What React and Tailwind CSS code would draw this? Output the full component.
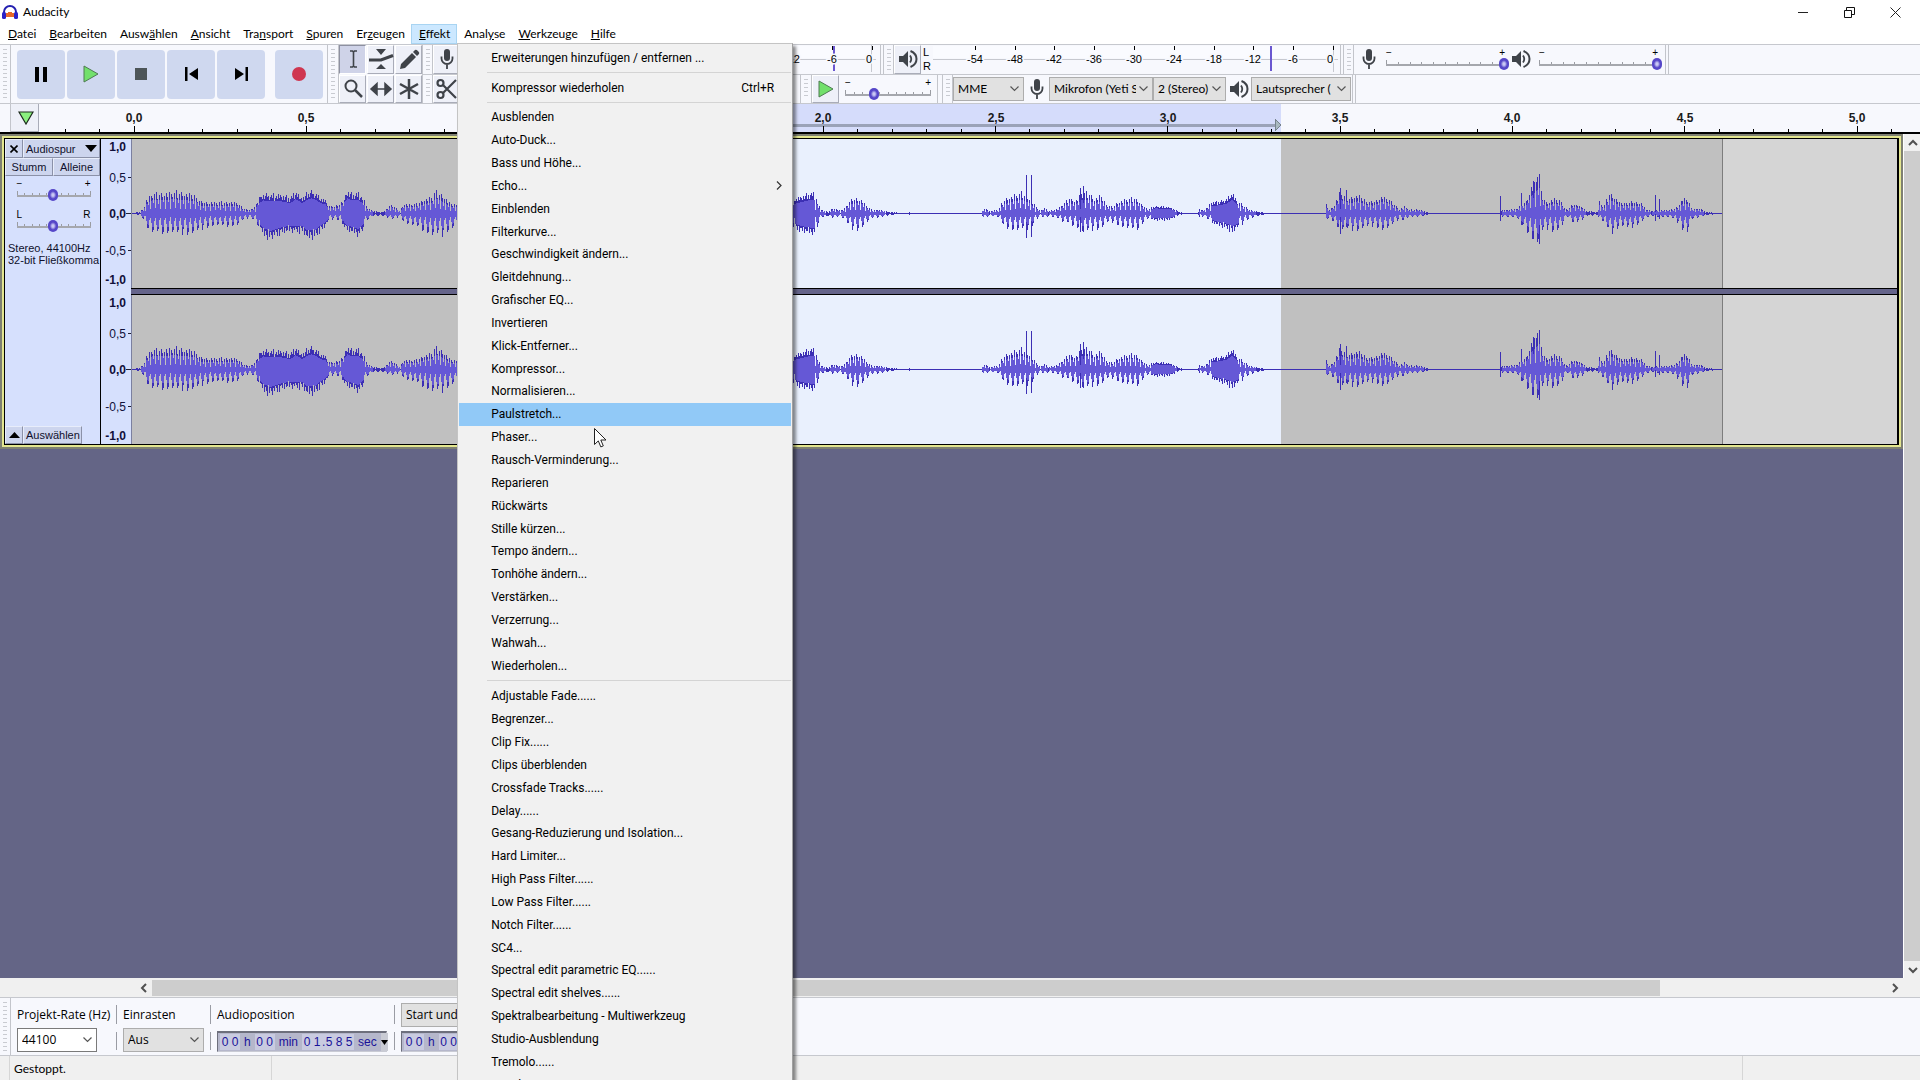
import { useState } from 'react';

const MENUS = [
  ['', 'D', 'atei'],
  ['', 'B', 'earbeiten'],
  ['Ausw', 'ä', 'hlen'],
  ['', 'A', 'nsicht'],
  ['Tra', 'n', 'sport'],
  ['', 'S', 'puren'],
  ['Er', 'z', 'eugen'],
  ['', 'E', 'ffekt'],
  ['Anal', 'y', 'se'],
  ['', 'W', 'erkzeuge'],
  ['', 'H', 'ilfe'],
];

const BUILT_IN_EFFECTS = [
  'Ausblenden', 'Auto-Duck...', 'Bass und Höhe...', 'Echo...', 'Einblenden', 'Filterkurve...',
  'Geschwindigkeit ändern...', 'Gleitdehnung...', 'Grafischer EQ...', 'Invertieren',
  'Klick-Entferner...', 'Kompressor...', 'Normalisieren...', 'Paulstretch...', 'Phaser...',
  'Rausch-Verminderung...', 'Reparieren', 'Rückwärts', 'Stille kürzen...', 'Tempo ändern...',
  'Tonhöhe ändern...', 'Verstärken...', 'Verzerrung...', 'Wahwah...', 'Wiederholen...',
];

const PLUGIN_EFFECTS = [
  'Adjustable Fade......', 'Begrenzer...', 'Clip Fix......', 'Clips überblenden',
  'Crossfade Tracks......', 'Delay......', 'Gesang-Reduzierung und Isolation...',
  'Hard Limiter...', 'High Pass Filter......', 'Low Pass Filter......', 'Notch Filter......',
  'SC4...', 'Spectral edit parametric EQ......', 'Spectral edit shelves......',
  'Spektralbearbeitung - Multiwerkzeug', 'Studio-Ausblendung', 'Tremolo......', 'Vocal Remover...',
];

// [x, peak above zero, peak below zero]
const ENVELOPE = [
  [0, 0, 0], [8, 1, 1], [12, 4, 5], [15, 13, 13], [19, 18, 18], [22, 20, 19], [29, 19, 19], [42, 21, 19],
  [56, 19, 20], [64, 18, 19], [69, 11, 15], [79, 11, 12], [94, 11, 12], [105, 11, 12], [112, 4, 6],
  [119, 3, 4], [124, 7, 7], [127, 15, 14], [132, 19, 21], [139, 18, 25], [149, 18, 20], [159, 15, 17],
  [164, 21, 18], [171, 15, 18], [176, 20, 24], [180, 22, 24], [184, 20, 23], [189, 15, 17], [194, 13, 12],
  [197, 7, 7], [202, 7, 5], [207, 8, 6], [212, 14, 11], [216, 22, 17], [221, 19, 19], [227, 19, 22],
  [232, 15, 15], [236, 5, 6], [242, 2, 2], [252, 1, 2], [257, 6, 4], [260, 9, 6], [264, 5, 4], [269, 2, 2],
  [272, 10, 8], [277, 9, 10], [284, 9, 12], [294, 14, 18], [301, 16, 22], [304, 22, 20], [311, 17, 21],
  [319, 10, 16], [327, 8, 10], [500, 8, 8], [640, 12, 10], [663, 14, 14], [671, 17, 18], [679, 20, 20],
  [683, 19, 20], [687, 9, 10], [689, 4, 4], [697, 1, 2], [702, 5, 4], [709, 2, 2], [714, 6, 7], [719, 13, 13],
  [725, 15, 17], [731, 13, 13], [736, 6, 8], [741, 3, 4], [749, 3, 3], [760, 1, 1], [770, 0, 0], [850, 0, 0],
  [852, 5, 4], [858, 2, 2], [867, 3, 3], [872, 13, 12], [883, 18, 17], [891, 20, 15], [899, 14, 14],
  [905, 6, 6], [909, 2, 2], [912, 6, 4], [917, 2, 2], [926, 4, 4], [931, 9, 8], [938, 15, 10], [944, 12, 12],
  [950, 20, 18], [957, 20, 17], [963, 14, 15], [969, 18, 15], [976, 8, 9], [981, 6, 8], [988, 12, 12],
  [994, 14, 14], [1003, 15, 16], [1008, 12, 15], [1013, 6, 7], [1017, 4, 5], [1024, 7, 6], [1038, 6, 6],
  [1044, 3, 3], [1049, 0, 0], [1066, 0, 0], [1068, 3, 2], [1074, 4, 3], [1079, 10, 8], [1088, 12, 12],
  [1095, 14, 14], [1101, 20, 18], [1106, 12, 14], [1113, 7, 8], [1119, 3, 4], [1131, 1, 1], [1135, 0, 0],
  [1194, 0, 0], [1195, 8, 6], [1198, 3, 4], [1203, 8, 8], [1208, 20, 16], [1219, 15, 15], [1227, 18, 17],
  [1234, 13, 13], [1242, 11, 12], [1251, 17, 16], [1257, 14, 14], [1264, 8, 9], [1268, 3, 4], [1273, 7, 7],
  [1278, 3, 3], [1287, 4, 3], [1295, 1, 1], [1299, 0, 0], [1368, 0, 0], [1371, 3, 3], [1381, 4, 3],
  [1386, 5, 4], [1390, 10, 11], [1395, 12, 16], [1400, 26, 24], [1404, 32, 26], [1408, 38, 30],
  [1410, 20, 18], [1415, 10, 14], [1423, 14, 18], [1430, 12, 15], [1433, 5, 6], [1436, 3, 3], [1442, 10, 9],
  [1451, 6, 6], [1455, 2, 2], [1466, 1, 1], [1468, 12, 5], [1472, 6, 8], [1478, 19, 18], [1482, 17, 18],
  [1489, 10, 12], [1499, 11, 14], [1510, 10, 8], [1514, 4, 4], [1520, 2, 2], [1530, 3, 3], [1539, 3, 3],
  [1546, 6, 8], [1551, 14, 15], [1556, 14, 18], [1561, 4, 5], [1569, 4, 3], [1575, 1, 1], [1591, 0, 0],
];

const SPIKES = [
  [778, 1, 1], [895, 38, 24], [900, 38, 23], [949, 25, 18], [952, 27, 18], [1050, 1, 1], [1068, 4, 3],
  [1209, 25, 20], [1215, 23, 13], [1369, 17, 7], [1390, 20, 11], [1402, 32, 25], [1406, 36, 28], [1408, 39, 30], [1524, 18, 7], [1528, 14, 5],
];

function peakAt(x) {
  let i = 1;
  while (i < ENVELOPE.length - 1 && ENVELOPE[i][0] < x) i++;
  const [x0, u0, d0] = ENVELOPE[i - 1];
  const [x1, u1, d1] = ENVELOPE[i];
  const t = Math.min(1, (x - x0) / (x1 - x0));
  return [u0 + (u1 - u0) * t, d0 + (d1 - d0) * t];
}

function buildWave(mid) {
  let peaks = '';
  let rms = '';
  for (let x = 0; x < 1591; x++) {
    const [up, down] = peakAt(x);
    // loud vowels are dense, the others show single periods
    const dense = (x > 128 && x < 196) || (x > 212 && x < 232) || (x > 663 && x < 684) || (x > 1019 && x < 1044) || (x > 1080 && x < 1106);
    const phase = x % 5;
    const jitter = 0.9 + ((x * 7919) % 13) / 60;
    const f = jitter * (dense ? [1, 0.8, 1, 0.76, 0.9][phase] : [1, 0.8, 0.5, 0.95, 0.22][phase]);
    const g = jitter * (dense ? [0.85, 1, 0.7, 1, 0.74][phase] : [0.55, 1, 0.85, 0.35, 0.2][phase]);
    const u = Math.round(up * f);
    const d = Math.round(down * g);
    peaks += `M${x} ${mid - u}V${mid + 1 + d}`;
    if (up > 2) {
      rms += `M${x} ${mid - Math.min(u, Math.round(up * 0.66))}V${mid + 1 + Math.min(d, Math.round(down * 0.68))}`;
    }
  }
  SPIKES.forEach(([x, u, d]) => {
    peaks += `M${x} ${mid - u}V${mid + 1 + d}`;
  });
  return { peaks, rms };
}

const WAVE = buildWave(74);

function Channel() {
  return (
    <svg className="block w-full flex-1 bg-[#d5d5d5]" aria-hidden="true" shapeRendering="crispEdges">
      <rect width="1591" height="100%" fill="#c0c0c0" />
      <rect x="500" width="650" height="100%" fill="#e9f0fd" />
      <g transform="translate(0.5 0)">
        <path d={WAVE.peaks} stroke="#3c2fb4" />
        <path d={WAVE.rms} stroke="#6558d6" />
      </g>
      <rect x="1591" width="1" height="100%" fill="#7d7d7d" />
      <rect width="1" height="100%" fill="#7b80a0" />
    </svg>
  );
}

function Grip({ className = '' }) {
  return (
    <div className={`flex w-[11px] shrink-0 justify-center border-r border-[#c3c5cb] py-1 ${className}`}>
      <div className="w-1 bg-[repeating-linear-gradient(to_bottom,#c9cbd1_0_1px,transparent_1px_4px)]" />
    </div>
  );
}

function MicIcon() {
  return (
    <svg width="14" height="22" viewBox="0 0 14 22" aria-hidden="true">
      <rect x="4" y="1" width="6" height="12" rx="3" fill="#3f4349" />
      <path d="M1.5 8.500v2a5.500 5.500 0 0 0 11 0v-2M7 16v5" fill="none" stroke="#3f4349" strokeWidth="1.800" />
    </svg>
  );
}

function SpeakerIcon() {
  return (
    <svg width="20" height="20" viewBox="0 0 20 20" aria-hidden="true">
      <path d="M1 7h4l5-5v16l-5-5H1z" fill="#3f4349" />
      <path d="M12 6.500q2.500 3.500 0 7" fill="none" stroke="#3f4349" strokeWidth="1.800" />
      <path d="M12.500 2q6 2.500 6 8t-6 8" fill="none" stroke="#3f4349" strokeWidth="2" />
    </svg>
  );
}

function PlayIcon({ className }) {
  return (
    <svg viewBox="0 0 16 18" className={className} aria-hidden="true">
      <path d="M1 1l14 8-14 8z" fill="#72e06b" stroke="#4e7a52" />
    </svg>
  );
}

function Slider({ label, value, width, low = '−', high = '+', ticks = 10 }) {
  const step = (width - 9) / ticks;
  return (
    <div className="shrink-0 font-['Liberation_Sans',sans-serif]" style={{ width }}>
      <div className="flex h-[10px] justify-between px-1 text-[10px] leading-[10px] text-black">
        <span>{low}</span>
        <span>{high}</span>
      </div>
      <div className="grid h-3">
        <svg className="h-3 w-full [grid-area:1/1]" aria-hidden="true" shapeRendering="crispEdges">
          <rect x="4" y="6" width={width - 8} height="2" fill="#a5a7ad" />
          {Array.from({ length: ticks + 1 }, (_, i) => (
            <rect key={i} x={Math.round(4 + i * step)} y={i % ticks ? 4 : 2} width="1" height={i % ticks ? 2 : 4} fill="#9a9ca2" />
          ))}
        </svg>
        <input
          type="range"
          aria-label={label}
          defaultValue={value}
          className="z-10 h-3 w-full min-w-0 appearance-none bg-transparent [grid-area:1/1] [&::-webkit-slider-thumb]:h-3 [&::-webkit-slider-thumb]:w-[10px] [&::-webkit-slider-thumb]:appearance-none [&::-webkit-slider-thumb]:rounded-full [&::-webkit-slider-thumb]:bg-[radial-gradient(#c9c8f4_0_15%,#5647c8_45%)]"
        />
      </div>
    </div>
  );
}

function Combo({ label, value, className = '', tone = 'border-[#adadad] bg-[#e1e1e1]' }) {
  return (
    <div className={`grid items-center border ${tone} ${className}`}>
      <select aria-label={label} className="h-full w-full min-w-0 appearance-none overflow-hidden bg-transparent pr-4 pl-1 text-black outline-none [grid-area:1/1]">
        <option>{value}</option>
      </select>
      <svg width="9" height="6" viewBox="0 0 9 6" className="pointer-events-none mr-1 justify-self-end [grid-area:1/1]" aria-hidden="true">
        <path d="M.5.500l4 4 4-4" fill="none" stroke="#555" strokeWidth="1.200" />
      </svg>
    </div>
  );
}

const DB_MARKS = [0, 6, 12, 18, 24, 30, 36, 42, 48, 54];

function Meter({ zero, peak, width, marks = DB_MARKS }) {
  return (
    <svg width={width} height="27" className="shrink-0 font-['Liberation_Sans',sans-serif]" aria-hidden="true">
      <g shapeRendering="crispEdges">
        <rect y="1" width={width - 5} height="12" fill="#fafbff" />
        <path d={`M0 14.500H${width}M${width - 4.5} 0V27`} stroke="#c6c8cf" />
        <path d={`M${peak} 1V26`} stroke="#6a57d0" strokeWidth="2" />
      </g>
      {marks.map((db, i) => {
        const x = Math.round(zero - i * 39.8);
        return (
          <g key={db}>
            <path d={`M${x + 0.5} 1v4`} stroke="#000" />
            <text x={db ? x : x - 3} y="18" textAnchor="middle" fontSize="11" stroke="#f7f8fd" strokeWidth="3" paintOrder="stroke">
              {db ? `-${db}` : '0'}
            </text>
          </g>
        );
      })}
    </svg>
  );
}

function TransportButton({ label, children }) {
  return (
    <button type="button" aria-label={label} className="flex h-[49px] w-12 items-center justify-center rounded bg-[#cfd8ef]">
      {children}
    </button>
  );
}

function TransportBar() {
  return (
    <div className="flex border-r border-[#c3c5cb]">
      <Grip />
      <div className="flex items-center gap-0.5 pr-1 pl-1.5">
        <TransportButton label="Pause">
          <svg width="12" height="15" aria-hidden="true"><path d="M0 0h4v15H0zM8 0h4v15H8z" /></svg>
        </TransportButton>
        <TransportButton label="Wiedergabe"><PlayIcon className="h-[18px] w-4" /></TransportButton>
        <TransportButton label="Stopp">
          <svg width="12" height="12" aria-hidden="true"><rect width="12" height="12" fill="#4d5558" /></svg>
        </TransportButton>
        <TransportButton label="Zum Anfang">
          <svg width="13" height="14" aria-hidden="true"><path d="M0 0h2.500v14H0zM13 1v12L4 7z" /></svg>
        </TransportButton>
        <TransportButton label="Zum Ende">
          <svg width="13" height="14" aria-hidden="true"><path d="M10.500 0H13v14h-2.500zM0 1v12l9-6z" /></svg>
        </TransportButton>
        <div className="w-1.5" />
        <TransportButton label="Aufnahme">
          <svg width="14" height="14" aria-hidden="true"><circle cx="7" cy="7" r="7" fill="#cf3650" /></svg>
        </TransportButton>
      </div>
    </div>
  );
}

const TOOLS = [
  { name: 'Auswahl', art: <path d="M7 3h2.500l1 1 1-1H14M7 19h2.500l1-1 1 1H14M10.500 4v14" strokeWidth="1.600" /> },
  {
    name: 'Hüllkurve',
    art: (
      <>
        <path d="M-2 12h12l12-4.500" strokeWidth="3" />
        <path d="M5 1h10l-5 6zM5 21h10l-5-5z" fill="#3f4349" stroke="none" />
      </>
    ),
  },
  { name: 'Zeichnen', art: <path d="M1 21l1-5L13 5l4 4L6 20zM14 4l2-2q1-1 3 1t1 3l-2 2z" fill="#3f4349" stroke="none" /> },
  { name: 'Zoom', art: <><circle cx="8" cy="8" r="5.500" /><path d="M12 12l7 7" strokeWidth="2.500" /></> },
  { name: 'Zeitverschiebung', art: <path d="M1 11h18M6 5.500L0 11l6 5.500zM14 5.500l6 5.500-6 5.500z" fill="#3f4349" strokeWidth="1.500" /> },
  { name: 'Multi', art: <path d="M10 1v20M1 6l18 10M19 6L1 16" strokeWidth="2.500" /> },
];

function ToolsBar() {
  return (
    <div className="flex">
      <Grip />
      <div className="grid grid-cols-3 gap-px">
        {TOOLS.map((tool, i) => (
          <button
            key={tool.name}
            type="button"
            aria-label={tool.name}
            className={`flex w-[27px] items-center justify-center border ${
              i === 0 ? 'border-[#8d90a0] border-r-white border-b-white bg-[#cfd3e8]' : 'border-white border-r-[#a9acb8] border-b-[#a9acb8] bg-[#eef0f8]'
            }`}
          >
            <svg width="20" height="22" viewBox="0 0 20 22" fill="none" stroke="#3f4349" strokeWidth="2" className="overflow-visible" aria-hidden="true">
              {tool.art}
            </svg>
          </button>
        ))}
      </div>
    </div>
  );
}

const squareButton = 'flex w-[27px] shrink-0 items-center justify-center border border-white border-r-[#a9acb8] border-b-[#a9acb8] bg-[#eef0f8]';

function Toolbars() {
  return (
    <div className="flex h-[60px] shrink-0 border-y border-[#c6c8ce] bg-[#f7f8fd]">
      <TransportBar />
      <ToolsBar />
      <div className="flex min-w-0 flex-1 flex-col">
        <div className="flex flex-1 border-b border-[#c6c8ce]">
          <div className="flex w-[459px] shrink-0 border-r border-[#c3c5cb]">
            <Grip className="border-l" />
            <button type="button" aria-label="Aufnahmepegel" className={squareButton}><MicIcon /></button>
            <div className="flex flex-1 justify-end pr-1"><Meter width={100} zero={96} peak={58} marks={[0, 6, 12]} /></div>
          </div>
          <div className="flex w-[460px] shrink-0 border-r border-[#c3c5cb]">
            <Grip className="ml-0.5 border-l" />
            <button type="button" aria-label="Wiedergabepegel" className={squareButton}><SpeakerIcon /></button>
            <div className="flex flex-col justify-around px-0.5 font-['Liberation_Sans',sans-serif] text-[11px] leading-3">
              <span>L</span>
              <span>R</span>
            </div>
            <Meter width={405} zero={400} peak={338} />
          </div>
          <div className="flex w-[325px] shrink-0 items-center border-r border-[#c3c5cb]">
            <Grip className="ml-0.5 self-stretch border-l" />
            <div className="flex flex-1 items-center pl-2">
              <MicIcon />
              <div className="w-1.5" />
              <Slider label="Aufnahmelautstärke" width={127} value={100} />
              <div className="w-0.5" />
              <SpeakerIcon />
              <div className="w-1" />
              <Slider label="Wiedergabelautstärke" width={127} value={100} />
            </div>
          </div>
          <div className="ml-0.5 border-l border-[#c3c5cb]" />
        </div>
        <div className="flex flex-1">
          <div className="flex w-[379px] shrink-0 border-r border-[#c3c5cb]">
            <Grip className="border-l" />
            <button type="button" aria-label="Ausschneiden" className={squareButton}>
              <svg width="22" height="22" viewBox="0 0 22 22" fill="none" stroke="#3f4349" strokeWidth="2.200" aria-hidden="true">
                <circle cx="4.500" cy="5" r="3" />
                <circle cx="4.500" cy="17" r="3" />
                <path d="M7 7l13 13M7 15L20 2" />
              </svg>
            </button>
          </div>
          <div className="flex w-[137px] shrink-0 border-r border-[#c3c5cb]">
            <Grip />
            <button type="button" aria-label="Wiedergabe mit Geschwindigkeit" className={squareButton}><PlayIcon className="h-[18px] w-4" /></button>
            <div className="flex items-center pl-0.5"><Slider label="Wiedergabegeschwindigkeit" width={94} value={33} /></div>
          </div>
          <div className="flex w-[415px] shrink-0 items-stretch border-r border-[#c3c5cb]">
            <Grip className="ml-1 border-l" />
            <div className="flex flex-1 items-center py-0.5">
              <Combo label="Audio-Host" value="MME" className="h-6 w-[71px]" />
              <div className="flex w-[25px] justify-center"><MicIcon /></div>
              <Combo label="Aufnahmegerät" value="Mikrofon (Yeti Stereo Mic" className="h-6 w-[104px]" />
              <Combo label="Aufnahmekanäle" value="2 (Stereo)" className="h-6 w-[73px]" />
              <div className="flex w-[25px] justify-center"><SpeakerIcon /></div>
              <Combo label="Wiedergabegerät" value="Lautsprecher (" className="h-6 w-[100px]" />
            </div>
          </div>
          <div className="ml-0.5 border-l border-[#c3c5cb]" />
        </div>
      </div>
    </div>
  );
}

function Timeline() {
  const ticks = Array.from({ length: 54 }, (_, i) => i - 2);
  return (
    <div className="flex h-7 shrink-0 bg-[#f7f8fd]">
      <div className="w-[11px] border-r border-[#c3c5cb]" />
      <button type="button" aria-label="Angeheftete Wiedergabeposition" className="flex w-7 shrink-0 items-center justify-center border-r border-b border-[#a9acb8] bg-[#eef0f8] pl-0.5">
        <svg width="16" height="14" viewBox="0 0 16 14" aria-hidden="true">
          <path d="M1 1h14L8 13z" fill="#8af07e" stroke="#1d2b1d" strokeWidth="1.200" />
        </svg>
      </button>
      <svg className="h-7 min-w-0 flex-1 font-['Liberation_Sans',sans-serif]" role="img" aria-label="Zeitleiste">
        <g shapeRendering="crispEdges">
          <rect x="500" width="742" height="28" fill="#d5dcfb" />
          <rect x="500" y="20" width="736" height="3" fill="#9aa2b8" />
          <path d="M1236 15l6 6-6 6z" fill="#a9b9c0" stroke="#76838c" />
          {ticks.map((i) => (
            <rect key={i} x={Math.round(94.5 + i * 34.46)} y={i % 5 ? 25 : 22} width="1" height="6" fill="#000" />
          ))}
        </g>
        {ticks.filter((i) => i >= 0 && i % 5 === 0).map((i) => (
          <text key={i} x={Math.round(95 + i * 34.46)} y="18" textAnchor="middle" fontSize="12" fontWeight="700" fill="#1a1a1a">
            {(i / 10).toFixed(1).replace('.', ',')}
          </text>
        ))}
      </svg>
    </div>
  );
}

function AmplitudeScale() {
  return (
    <svg className="block w-full flex-1 font-['Liberation_Sans',sans-serif]" aria-hidden="true">
      {[['1,0', 12], ['0,5', 43], ['0,0', 79], ['-0,5', 116], ['-1,0', 145]].map(([text, y]) => (
        <text key={text} x="25" y={y} textAnchor="end" fontSize="12" fill="#10103a" fontWeight={text.endsWith('5') ? 400 : 700}>
          {text}
        </text>
      ))}
      <path d="M27 38.500h3M25 74.500h5M27 111.500h3" stroke="#223" />
    </svg>
  );
}

const panelButton = 'flex items-center border border-[#e8edfb] border-r-[#8b91a8] border-b-[#8b91a8] bg-[#cdd5ee]';

function TrackPanel() {
  return (
    <div className="flex w-24 shrink-0 flex-col border-r border-black bg-[#d6e0fd] font-['Liberation_Sans',sans-serif] text-[11px] leading-3 text-[#10102c]">
      <div className="flex h-[19px]">
        <button type="button" aria-label="Spur schließen" className={`w-[18px] justify-center ${panelButton}`}>
          <svg width="8" height="8" aria-hidden="true"><path d="M.5.500l7 7M7.500.500l-7 7" stroke="#000" strokeWidth="1.600" /></svg>
        </button>
        <button type="button" className={`flex-1 justify-between px-0.5 ${panelButton}`}>
          Audiospur
          <svg width="12" height="7" aria-hidden="true"><path d="M0 0h12L6 7z" /></svg>
        </button>
      </div>
      <div className="flex h-[18px]">
        <button type="button" className={`w-12 justify-center ${panelButton}`}>Stumm</button>
        <button type="button" className={`flex-1 justify-center ${panelButton}`}>Alleine</button>
      </div>
      <div className="flex flex-col items-center gap-[9px] pt-[3px] pl-0.5">
        <Slider label="Verstärkung" width={82} value={49} />
        <Slider label="Balance" width={82} value={49} low="L" high="R" />
      </div>
      <p className="mt-2.5 pl-[3px] whitespace-nowrap">
        Stereo, 44100Hz
        <br />
        32-bit Fließkomma
      </p>
      <div className="mt-auto flex h-[18px]">
        <button type="button" aria-label="Spur einklappen" className={`w-[18px] justify-center ${panelButton}`}>
          <svg width="11" height="6" aria-hidden="true"><path d="M0 6h11L5.500 0z" /></svg>
        </button>
        <button type="button" className={`w-[59px] pl-0.5 ${panelButton}`}>Auswählen</button>
      </div>
    </div>
  );
}

function Track() {
  return (
    <div className="border-2 border-[#7e8072] bg-black">
      <div className="flex h-[311px] border-2 border-[#e3e68f] bg-black py-px pr-0.5 pl-px">
        <TrackPanel />
        <div className="flex w-[30px] shrink-0 flex-col gap-[7px] bg-[#d6e0fd]">
          <AmplitudeScale />
          <AmplitudeScale />
        </div>
        <div className="flex min-w-0 flex-1 flex-col">
          <Channel />
          <div className="h-[7px] border-y border-black bg-[#65648a]" />
          <Channel />
        </div>
      </div>
    </div>
  );
}

const ARROWS = {
  up: 'M1 7l4-4 4 4',
  down: 'M1 3l4 4 4-4',
  left: 'M7 1L3 5l4 4',
  right: 'M3 1l4 4-4 4',
};

function ScrollArrow({ dir, label }) {
  return (
    <button type="button" aria-label={label} className="flex size-[17px] shrink-0 items-center justify-center">
      <svg width="10" height="10" aria-hidden="true">
        <path d={ARROWS[dir]} fill="none" stroke="#505050" strokeWidth="2" />
      </svg>
    </button>
  );
}

function TimeField({ label, parts }) {
  return (
    <div role="group" aria-label={label} className="flex h-[21px] w-[170px] items-center border border-[#c9cbd4] border-t-2 border-t-[#6d6f7c] border-l-[#6d6f7c] bg-[#b5b7cb] pl-0.5 font-['Liberation_Sans',sans-serif] text-[12px] leading-4 text-[#1a1299]">
      {parts.map((part, i) =>
        /\d/.test(part) ? (
          <span key={i} className="flex bg-[#c9cbe0]">
            {part.split('').map((c, j) => (
              <span key={j} className={c === '.' ? 'w-0.5 text-center' : 'w-[10px] text-center'}>{c}</span>
            ))}
          </span>
        ) : (
          <span key={i} className="px-1">{part}</span>
        ),
      )}
      <button type="button" aria-label="Format" className="ml-auto flex h-full w-2 items-center bg-[#c9cbd4]">
        <svg width="7" height="5" aria-hidden="true"><path d="M0 0h7L3.500 5z" /></svg>
      </button>
    </div>
  );
}

function SelectionBar() {
  const column = 'flex flex-col justify-between';
  const rule = (
    <div className="flex flex-col gap-2 py-0.5">
      <div className="w-px flex-1 bg-[#9a9ca4]" />
      <div className="w-px flex-1 bg-[#9a9ca4]" />
    </div>
  );
  return (
    <div className="flex h-[59px] shrink-0 border-y border-[#c6c8ce] bg-[#f7f8fd] font-['Open_Sans','Noto_Sans',sans-serif]">
      <Grip />
      <div className="flex gap-1.5 pt-[5px] pb-[3px] pl-1.5">
        <div className={`w-[93px] ${column}`}>
          <span className="pt-1 whitespace-nowrap">Projekt-Rate (Hz)</span>
          <Combo label="Projekt-Rate (Hz)" value="44100" tone="border-[#7a7a7a] bg-white" className="h-6 w-20" />
        </div>
        {rule}
        <div className={`w-[81px] ${column}`}>
          <span className="pt-1">Einrasten</span>
          <Combo label="Einrasten" value="Aus" className="h-6" />
        </div>
        {rule}
        <div className={`w-[171px] ${column}`}>
          <span className="pt-1">Audioposition</span>
          <TimeField label="Audioposition" parts={['00', 'h', '00', 'min', '01.585', 'sec']} />
        </div>
        {rule}
        <div className={`w-[360px] ${column}`}>
          <Combo label="Auswahlmodus" value="Start und Ende der Auswahl" className="h-6" />
          <TimeField label="Auswahlbeginn" parts={['00', 'h', '00', 'min', '00.000', 'sec']} />
        </div>
      </div>
    </div>
  );
}

function EffectItem({ children, shortcut, submenu, active, onHover }) {
  return (
    <button
      type="button"
      role="menuitem"
      onMouseEnter={onHover}
      className={`flex min-h-0 w-full items-center pr-[17px] pl-8 text-left whitespace-nowrap ${active ? 'bg-[#91c9f7]' : ''}`}
    >
      <span className="flex-1">{children}</span>
      {shortcut && <span>{shortcut}</span>}
      {submenu && (
        <svg width="6" height="9" className="-mr-2" aria-hidden="true">
          <path d="M1 .5l4 4-4 4" fill="none" stroke="#333" strokeWidth="1.200" />
        </svg>
      )}
    </button>
  );
}

function MenuRule() {
  return <div className="my-[3px] ml-7 h-px bg-[#d4d4d4]" />;
}

function EffectMenu() {
  const [active, setActive] = useState('Paulstretch...');
  const item = (name) => (
    <EffectItem key={name} active={active === name} submenu={name === 'Echo...'} onHover={() => setActive(name)}>
      {name}
    </EffectItem>
  );
  return (
    <div role="menu" className="absolute top-[19px] left-full z-20 w-[336px] border border-[#c4c4c4] border-r-[#a0a0a0] bg-[#f1f1f1] px-px py-0.5 font-['Roboto',sans-serif] shadow-[3px_3px_3px_rgba(0,0,0,0.45)]">
      <div className="grid h-[23px]"><EffectItem>Erweiterungen hinzufügen / entfernen ...</EffectItem></div>
      <MenuRule />
      <div className="grid h-[23px]"><EffectItem shortcut="Ctrl+R">Kompressor wiederholen</EffectItem></div>
      <MenuRule />
      <div className="grid h-[571px] auto-rows-fr">{BUILT_IN_EFFECTS.map(item)}</div>
      <MenuRule />
      <div className="grid h-[412px] auto-rows-fr pt-px">{PLUGIN_EFFECTS.map(item)}</div>
    </div>
  );
}

function TitleBar() {
  return (
    <div className="flex h-6 shrink-0 items-center bg-white px-0.5">
      <svg width="16" height="16" viewBox="0 0 16 16" aria-hidden="true">
        <path d="M4 11h8M5 9v4M7 8v5M9 8v5M11 9v4" stroke="#e8682a" strokeWidth="2" />
        <path d="M2 9V8a6 6 0 0 1 12 0v1" fill="none" stroke="#2420b0" strokeWidth="2" />
        <rect y="8" width="4" height="7" rx="1.500" fill="#2a22c8" />
        <rect x="12" y="8" width="4" height="7" rx="1.500" fill="#2a22c8" />
      </svg>
      <span className="ml-[5px] flex-1">Audacity</span>
      <button type="button" aria-label="Minimieren" className="flex w-[46px] justify-center">
        <svg width="10" height="10" aria-hidden="true"><path d="M0 5.500h10" stroke="#222" /></svg>
      </button>
      <button type="button" aria-label="Verkleinern" className="flex w-[46px] justify-center">
        <svg width="11" height="11" aria-hidden="true"><path d="M.5 3.500h7v7h-7zM2.500 3V.500h8v7H8" fill="none" stroke="#111" /></svg>
      </button>
      <button type="button" aria-label="Schließen" className="flex w-[46px] justify-center">
        <svg width="11" height="11" aria-hidden="true"><path d="M.5.500l10 10M10.500.500l-10 10" stroke="#222" /></svg>
      </button>
    </div>
  );
}

function MenuBar() {
  return (
    <nav className="flex h-5 shrink-0 bg-white pl-px">
      {MENUS.map(([before, key, after]) => {
        const open = after === 'ffekt';
        return (
          <div key={after} className="relative">
            <button type="button" className={`flex h-5 items-center ${open ? 'bg-[#cce8ff] pr-[7px] pl-2 ring-1 ring-[#a8d4f2] ring-inset' : 'pr-1.5 pl-[7px]'}`}>
              <span>{before}<u className="underline-offset-1">{key}</u>{after}</span>
            </button>
            {open && <EffectMenu />}
          </div>
        );
      })}
    </nav>
  );
}

export default function App() {
  return (
    <div className="relative flex h-screen flex-col overflow-hidden bg-[#f0f0f0] font-['Lato','Open_Sans',sans-serif] text-[12px] leading-4 text-black">
      <TitleBar />
      <MenuBar />
      <Toolbars />
      <Timeline />
      <div className="flex min-h-0 flex-1 border-t-2 border-black">
        <div className="min-w-0 flex-1 bg-[#646586]">
          <Track />
        </div>
        <div className="flex w-[17px] shrink-0 flex-col border-l border-white">
          <ScrollArrow dir="up" label="Nach oben" />
          <div className="flex-1 bg-[#cdcdcd]" />
          <ScrollArrow dir="down" label="Nach unten" />
        </div>
      </div>
      <div className="flex h-[19px] shrink-0 items-center pr-[17px] pl-[135px]">
        <ScrollArrow dir="left" label="Nach links" />
        <div className="h-4 flex-[20] bg-[#cdcdcd]" />
        <div className="flex-[3]" />
        <ScrollArrow dir="right" label="Nach rechts" />
      </div>
      <SelectionBar />
      <footer className="flex h-6 shrink-0 items-center">
        <div className="h-full w-[10px] border-r border-[#d6d6d6]" />
        <span className="w-[261px] pt-0.5 pl-1">Gestoppt.</span>
        <div className="h-full flex-1 border-l border-[#d6d6d6]" />
        <div className="h-full w-[178px] border-l border-[#d6d6d6]" />
      </footer>
      <svg width="13" height="20" viewBox="0 0 13 20" className="pointer-events-none absolute top-[428px] left-[594px] z-30" aria-hidden="true">
        <path d="M.5.500v16l3.800-3.600 2.500 6 2.500-1-2.500-5.900h5.200z" fill="#fff" stroke="#222" />
      </svg>
    </div>
  );
}
